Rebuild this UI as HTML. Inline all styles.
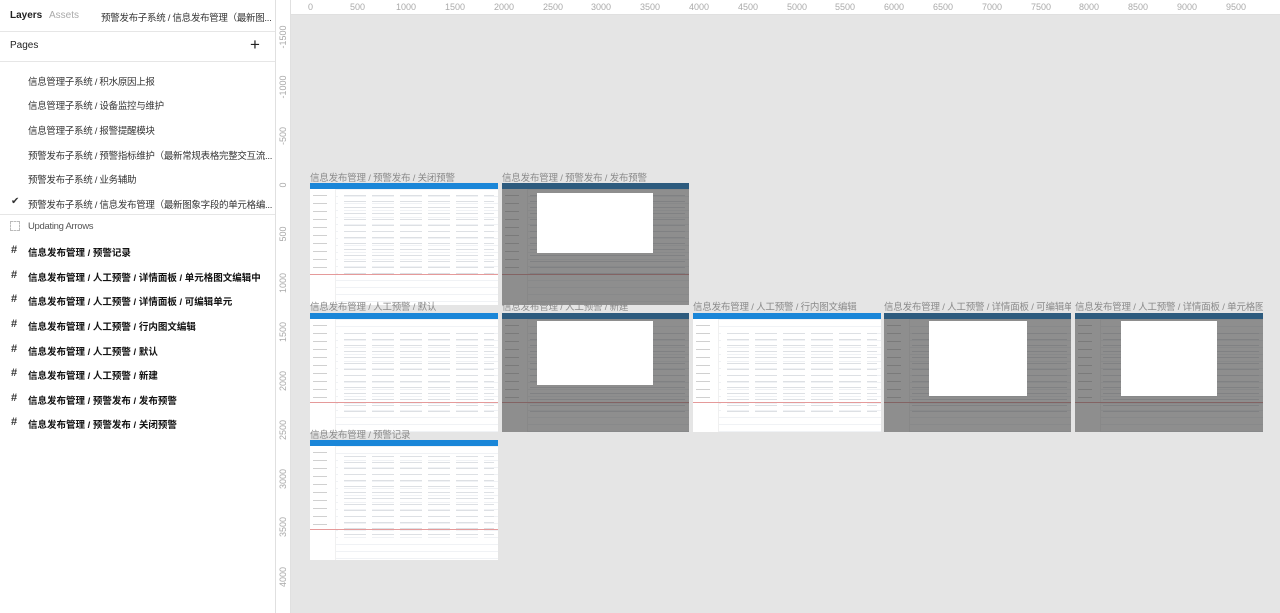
<!DOCTYPE html>
<html><head><meta charset="utf-8"><style>
*{margin:0;padding:0;box-sizing:border-box}
body{width:1280px;height:613px;overflow:hidden;background:#e5e5e5;font-family:"Liberation Sans","Noto Sans CJK SC",sans-serif;position:relative}
#side{position:absolute;left:0;top:0;width:276px;height:613px;background:#fff;border-right:1px solid #e0e0e0;overflow:hidden}
.t{position:absolute;font-size:11px;white-space:nowrap}
.pg{position:absolute;left:28px;font-size:9.5px;color:#333;white-space:nowrap;letter-spacing:-0.3px}
.fr{position:absolute;left:28px;font-size:9.5px;color:#111;font-weight:bold;white-space:nowrap}
.hash{position:absolute;left:11px;font-size:11px;color:#333;font-weight:bold}
.hr{position:absolute;left:0;width:275px;height:1px;background:#e6e6e6}
#rt{position:absolute;left:276px;top:0;width:1004px;height:15px;background:#fff;border-bottom:1px solid #e0e0e0}
#rl{position:absolute;left:276px;top:0;width:15px;height:613px;background:#fff;border-right:1px solid #e0e0e0}
.rx{position:absolute;top:2px;font-size:9px;color:#aaa}
.ry{position:absolute;left:268px;font-size:9px;color:#aaa;transform:rotate(-90deg);transform-origin:center;width:30px;text-align:center}
.f{position:absolute;background:#fff;overflow:hidden;
background-image:repeating-linear-gradient(180deg,transparent 0 6px,#f0f2f5 6px 7px)}
.f .bar{position:absolute;left:0;top:0;right:0;height:6px;background:#1a86d8}
.f .nav{position:absolute;left:0;top:6px;width:26px;bottom:0;background:#fff;border-right:1px solid #f0f0f0}
.f .nav:after{content:"";position:absolute;left:3px;top:6px;width:14px;height:80px;background:repeating-linear-gradient(180deg,#d0d0d0 0 1px,transparent 1px 8px)}
.f .tbl{position:absolute;left:28px;top:12px;right:4px;height:82px;background:repeating-linear-gradient(180deg,#dde0e4 0 1px,transparent 1px 6px)}
.f .tbl2{position:absolute;left:28px;top:12px;right:4px;height:82px;background:repeating-linear-gradient(90deg,#fff 0 6px,transparent 6px 28px)}
.f .red{position:absolute;left:0;right:0;height:1px;background:#e59a9a;top:91px}
.f .dim{position:absolute;inset:0;background:rgba(60,60,60,.58)}
.f .m{position:absolute;background:#fff}
.lb{position:absolute;font-size:9.5px;color:#8a8a8a;white-space:nowrap;overflow:hidden;letter-spacing:-0.2px}
</style></head><body>
<div id="side">
<div class="t" style="left:10px;top:10px;color:#222;font-weight:bold;font-size:10px">Layers</div>
<div class="t" style="left:49px;top:10px;color:#aaa;font-size:10px">Assets</div>
<div class="t" style="left:101px;top:10px;color:#333;font-size:9.5px;letter-spacing:-0.3px">预警发布子系统 / 信息发布管理（最新图... ⌃</div>
<div class="hr" style="top:31px"></div>
<div class="t" style="left:10px;top:40px;color:#222;font-size:10px">Pages</div>
<div class="t" style="left:250px;top:35px;color:#222;font-size:17px">+</div>
<div class="hr" style="top:61px"></div>
<div class="pg" style="top:74px">信息管理子系统 / 积水原因上报</div>
<div class="pg" style="top:98px">信息管理子系统 / 设备监控与维护</div>
<div class="pg" style="top:123px">信息管理子系统 / 报警提醒模块</div>
<div class="pg" style="top:148px">预警发布子系统 / 预警指标维护（最新常规表格完整交互流...</div>
<div class="pg" style="top:172px">预警发布子系统 / 业务辅助</div>
<div class="t" style="left:11px;top:196px;font-size:10px;color:#333">✔</div>
<div class="pg" style="top:197px">预警发布子系统 / 信息发布管理（最新图象字段的单元格编...</div>
<div class="hr" style="top:214px"></div>
<div class="t" style="left:10px;top:221px;width:10px;height:10px;border:1px dashed #bbb"></div>
<div class="pg" style="top:221px;color:#555">Updating Arrows</div>
<div class="hash" style="top:244px">#</div><div class="fr" style="top:245px">信息发布管理 / 预警记录</div>
<div class="hash" style="top:269px">#</div><div class="fr" style="top:270px">信息发布管理 / 人工预警 / 详情面板 / 单元格图文编辑中</div>
<div class="hash" style="top:293px">#</div><div class="fr" style="top:294px">信息发布管理 / 人工预警 / 详情面板 / 可编辑单元</div>
<div class="hash" style="top:318px">#</div><div class="fr" style="top:319px">信息发布管理 / 人工预警 / 行内图文编辑</div>
<div class="hash" style="top:343px">#</div><div class="fr" style="top:344px">信息发布管理 / 人工预警 / 默认</div>
<div class="hash" style="top:367px">#</div><div class="fr" style="top:368px">信息发布管理 / 人工预警 / 新建</div>
<div class="hash" style="top:392px">#</div><div class="fr" style="top:393px">信息发布管理 / 预警发布 / 发布预警</div>
<div class="hash" style="top:416px">#</div><div class="fr" style="top:417px">信息发布管理 / 预警发布 / 关闭预警</div>
</div>
<div id="rt">
<span class="rx" style="left:32px">0</span><span class="rx" style="left:74px">500</span><span class="rx" style="left:120px">1000</span><span class="rx" style="left:169px">1500</span><span class="rx" style="left:218px">2000</span><span class="rx" style="left:267px">2500</span><span class="rx" style="left:315px">3000</span><span class="rx" style="left:364px">3500</span><span class="rx" style="left:413px">4000</span><span class="rx" style="left:462px">4500</span><span class="rx" style="left:511px">5000</span><span class="rx" style="left:559px">5500</span><span class="rx" style="left:608px">6000</span><span class="rx" style="left:657px">6500</span><span class="rx" style="left:706px">7000</span><span class="rx" style="left:755px">7500</span><span class="rx" style="left:803px">8000</span><span class="rx" style="left:852px">8500</span><span class="rx" style="left:901px">9000</span><span class="rx" style="left:950px">9500</span>
</div>
<div id="rl"></div>
<span class="ry" style="top:32px">-1500</span><span class="ry" style="top:82px">-1000</span><span class="ry" style="top:131px">-500</span><span class="ry" style="top:180px">0</span><span class="ry" style="top:229px">500</span><span class="ry" style="top:278px">1000</span><span class="ry" style="top:327px">1500</span><span class="ry" style="top:376px">2000</span><span class="ry" style="top:425px">2500</span><span class="ry" style="top:474px">3000</span><span class="ry" style="top:522px">3500</span><span class="ry" style="top:572px">4000</span>

<div class="lb" style="left:310px;top:170px;width:188px">信息发布管理 / 预警发布 / 关闭预警</div>
<div class="f" style="left:310px;top:183px;width:188px;height:122px"><div class="bar"></div><div class="nav"></div><div class="tbl"></div><div class="tbl2"></div><div class="red"></div></div>
<div class="lb" style="left:502px;top:170px;width:187px">信息发布管理 / 预警发布 / 发布预警</div>
<div class="f" style="left:502px;top:183px;width:187px;height:122px"><div class="bar"></div><div class="nav"></div><div class="tbl"></div><div class="red"></div><div class="dim"></div><div class="m" style="left:35px;top:10px;width:116px;height:60px"></div></div>

<div class="lb" style="left:310px;top:299px;width:188px">信息发布管理 / 人工预警 / 默认</div>
<div class="f" style="left:310px;top:313px;width:188px;height:119px"><div class="bar"></div><div class="nav"></div><div class="tbl" style="top:20px"></div><div class="tbl2" style="top:20px"></div><div class="red" style="top:89px"></div></div>
<div class="lb" style="left:502px;top:299px;width:187px">信息发布管理 / 人工预警 / 新建</div>
<div class="f" style="left:502px;top:313px;width:187px;height:119px"><div class="bar"></div><div class="nav"></div><div class="tbl" style="top:20px"></div><div class="red" style="top:89px"></div><div class="dim"></div><div class="m" style="left:35px;top:8px;width:116px;height:64px"></div></div>
<div class="lb" style="left:693px;top:299px;width:188px">信息发布管理 / 人工预警 / 行内图文编辑</div>
<div class="f" style="left:693px;top:313px;width:188px;height:119px"><div class="bar"></div><div class="nav"></div><div class="tbl" style="top:20px"></div><div class="tbl2" style="top:20px"></div><div class="red" style="top:89px"></div></div>
<div class="lb" style="left:884px;top:299px;width:187px">信息发布管理 / 人工预警 / 详情面板 / 可编辑单元</div>
<div class="f" style="left:884px;top:313px;width:187px;height:119px"><div class="bar"></div><div class="nav"></div><div class="tbl" style="top:20px"></div><div class="red" style="top:89px"></div><div class="dim"></div><div class="m" style="left:45px;top:8px;width:98px;height:75px"></div></div>
<div class="lb" style="left:1075px;top:299px;width:188px">信息发布管理 / 人工预警 / 详情面板 / 单元格图...</div>
<div class="f" style="left:1075px;top:313px;width:188px;height:119px"><div class="bar"></div><div class="nav"></div><div class="tbl" style="top:20px"></div><div class="red" style="top:89px"></div><div class="dim"></div><div class="m" style="left:46px;top:8px;width:96px;height:75px"></div></div>

<div class="lb" style="left:310px;top:427px;width:188px">信息发布管理 / 预警记录</div>
<div class="f" style="left:310px;top:440px;width:188px;height:120px"><div class="bar"></div><div class="nav"></div><div class="tbl" style="top:16px"></div><div class="tbl2" style="top:16px"></div><div class="red" style="top:89px"></div></div>
</body></html>
